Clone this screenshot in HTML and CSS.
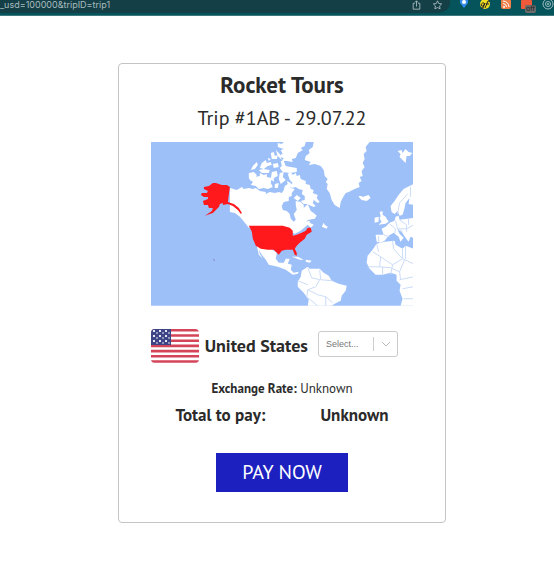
FILE: index.html
```
<!DOCTYPE html>
<html lang="en">
<head>
    <meta charset="UTF-8">
    <meta name="viewport" content="width=device-width, initial-scale=1.0">
    <title>Rocket Tours</title>
    <link rel="stylesheet" href="styles.css">
</head>
<body>
    <header class="toolbar">
        <div class="address">
            <span class="url">_usd=100000&amp;tripID=trip1</span>
            <svg class="icon" viewBox="0 0 12 12"><path d="M4 4H2v7h8V4H8M6 8V1M4 3l2-2 2 2"/></svg>
            <svg class="icon" viewBox="0 0 12 12"><path d="M6 1l1.500 3.200 3.500.5-2.500 2.400.6 3.500L6 9l-3.100 1.600.6-3.500L1 4.700l3.500-.5z"/></svg>
        </div>
        <div class="extensions">
            <svg viewBox="0 0 12 14"><path fill="#2f8bea" d="M2 0h8v3L6 8 2 3z"/><circle cx="6" cy="2" r="2" fill="#fff"/></svg>
            <svg viewBox="0 0 12 14"><circle cx="6" cy="4" r="5" fill="#f0dc20"/><path d="M5 3c-3-1-4 4-1 3l2-3-2 5H2M6 8l3-7h2M7 4h3" fill="none" stroke="#222"/></svg>
            <svg viewBox="0 0 12 14"><rect x="1" y="-1" width="10" height="10" rx="2" fill="#f08048"/><circle cx="4" cy="7" r="1" fill="#fff"/><path d="M3 3.500a3.500 3.500 0 0 1 3.500 3.500M3 1a6 6 0 0 1 6 6" fill="none" stroke="#fff"/></svg>
            <span class="blocker">
                <svg viewBox="0 0 12 14"><rect width="11" height="9" rx="1" fill="#f0593a"/></svg>
                <span class="badge">off</span>
            </span>
            <svg viewBox="0 0 12 14"><g fill="none" stroke="#9dbcc2"><circle cx="6" cy="4" r="5"/><circle cx="6" cy="4" r="2.500"/></g><circle cx="6" cy="4" r="1" fill="#9dbcc2"/></svg>
        </div>
    </header>

    <main>
        <div class="card">
            <h1>Rocket Tours</h1>
            <h2>Trip #1AB - 29.07.22</h2>

            <svg class="map" viewBox="0 0 263 164" role="img" aria-label="Map with the United States highlighted">
                <rect width="263" height="164" fill="#9dc0f9"/>
                <g class="land">
                    <!-- Greenland, Iceland, Svalbard -->
                    <path d="M163 0H219L215 5l1 4-3 3 1 5-2 4 2 4-3 4 1 5-3 1 2 4-3 2 1 4-5 2-6 3-3 1-3 5-2 4-1 6-5-3-3-5-2-7-3-4 1-5-2-2 2-3-3-3-1-6-3-4-6-2-6 1 2-3-6-2 1-4 4-3-1-3 4-3z"/>
                    <path d="M209 56l-1-2 3 0 1 1 6-2 2 3-4 3-5-1z"/>
                    <path d="M247 9l4-1 1 3 3-4 3 3 4 1-3 3-3 0-1 7-4-4-2-2 1-3z"/>
                    <!-- Ellesmere and the northern islands -->
                    <path d="M127 1l4 1 2-2h22l-1 4-4 2 2 2-5 3-2 5-4 1 1 3-6-1-5 0 2-3-5-2 4-2-2-4 3-1-6-2z"/>
                    <path d="M120 11l3-1 1 4 3-1-1 4-5 0zM125 8l4 4 2 6-4-4zM111 21l4-3 1 3 4-1 1 3-4 1-4 3-4-1zM102 24l4-4 1 3-3 4-4 1zM117 16l3 1-2 2zM130 12l4 2-3 2zM122 22l5-1 1 4-5 1z"/>
                    <path d="M130 19l3 0 2 5 5 1 6 1 0 4-7 1-7-1-3-4 2-2z"/>
                    <path d="M98 31l5-1 3 3-2 4-4 2-2-3zM104 35l5-1 0-3 4 2 3-1 0 3 5 1-1 5 2 4-5 2-4-1-5 1-3-3-5-1 2-3-2-3zM108 28l5-1 6 1-1 3-7 0zM121 30l5-1 1 5-4 2 0 4-3-3zM129 31l4-1-1 5 3 3-5 4-2-5zM124 42l4-1-1 5-3 0z"/>
                    <!-- Baffin -->
                    <path d="M137 32l3-2 2 3 3-2 1 3 3-1 1 4 5 2 0 3 4 1 1 4 3 1-1 3 5 2-1 3 3 4-2 1-4-3-1 3 3 3-2 1-7-3-3 0-3-3 4-1 0-4-3-2 1-4-4-1-3-2-4 1-2-3 3-2-3-3zM143 56l3-3 4 3-3 3z"/>
                    <!-- Canada -->
                    <path d="M79 46l7 2 5-3 2 2 5-1 4 1 3-1 4 3 6 1 0 2 4-2 5 1 4-1 3 1 2-3 1-4 3-2-1-3 4 2 0 5 4 1-3 4 0 3-3 1 0 4-5 1-2 4 1 4 4 1 3 3 1 5 3 3 2-2-2-6 3-4-1-5 0-4 5 1 3 3 0 3 4-4 3 7 3 2 3 3-2 3-6 1-3 2 4-1 0 2 4 2-3 3-3-3-7 6-6 3-7-3-8-3H98l-4-5-5-6-5-4-5-1z"/>
                    <path d="M171 85l2-4 1 2 3 2-1 2z"/>
                    <!-- Mexico and Central America -->
                    <path d="M106 104l4 1 6 2h4l6 4-1 6 3 4 5 0 2-4 4 0-2 5 4 1-1 5 3 3 5-1-1 2-5 1-7-5-8-3-9-2-3-5-4-5-3-5 1 4 3 5-4-4z"/>
                    <path d="M141 115l6 0 6 3-4 0zM155 118l6 1-2 2-4-1z"/>
                    <!-- South America -->
                    <path d="M151 129l6-4 2 2 10 0 4 4 5 3 3 5 7 3 8 2-1 5-4 5-1 5-6 3-3 2H157l1-6-5-7-6-6 0-5 3-5z"/>
                    <!-- Africa -->
                    <path d="M226 102l8-2 10-1 1 4 7 4 3-3 8 3V164H250l2-7-3-8 1-6-4-4 0-6-6-2-8 2-7 0-6-6-3-6 1-7 5-6z"/>
                    <!-- Europe -->
                    <path d="M225 93h8l-2-6 4-2 4-4 5-2 1-4 3-1 1 4 14-2V96l-3-1-2 5-3-4-4-6-4-2 2 4 4 4-3 4-2-5-5-4-5 3-4 5-4 2-4-1z"/>
                    <path d="M241 70l-1-6 4-5 4-6 5-6 10-5V63l-5-1 1-6-4 5-1 5-2 7-3 1-2-5-3 3z"/>
                    <path d="M229 70l3-1 0 4 3 2 3 5-3 2-7 1 3-3-2-3 1-3zM224 76l4-1v5l-4 1z"/>
                </g>
                <g class="borders">
                    <path d="M157 126l4 10 8 2-4 7-8 3-1 8M157 148l10 5 8 2 0 9M169 128l1 10 12 1M147 139l10 4M175 155l7 6M157 156l10 8"/>
                    <path d="M222 110l8 5 12 8 10-6 0-11M230 115l-1 10-12 0M242 123l-2 10M252 117l11 5M226 102l2 8M242 99l1 8 9 10M229 125l11 1 9 4 1 8M249 138l14-3M252 147l11-2M253 157l10 0M255 104v13M232 125v8M249 130l5-12"/>
                    <path d="M233 93l6 2M239 82l6 5-1 5M245 79l2 8 9 0 7-4M249 78l7 5v7M258 77v6M228 94v6M247 72l2-11 8-9M260 45v10M247 87l5 3"/>
                </g>
                <g class="selected">
                    <path d="M79 45l-3-2-5 0-6-2-3 0-4 3-5 1 0 2 4 2-1 2-5 0-1 2 3 2 4 0 0 2-5 2 1 4 4 0 1 3 4 0-1 3-7 5 8-3 6-6 1-3 3-1 0 2 5-1 5 2 5 4 3 4 1-1-3-5-5-4-6-2z"/>
                    <path d="M98 84h34l7 2 3 3 0 5 4-1 5-2 4-2 2-3 3 0 1 4-5 3-2 4-5 4-3 3-2 3 2 4 0 3-2-1-2-5-7 0-4 1-3 4-5-5-6 0-7-1-5-3-3-7-1-7z"/>
                    <path class="hawaii" d="M62 117h1v1h1v1h-1z"/>
                </g>
            </svg>

            <div class="country">
                <svg class="flag" viewBox="0 0 48 34" role="img" aria-label="Flag of the United States">
                    <defs>
                        <clipPath id="flag-shape"><rect width="48" height="34" rx="4"/></clipPath>
                        <pattern id="stars" width="6" height="5" patternUnits="userSpaceOnUse">
                            <path d="M2 1h2v2H2zM5 3.500h1v1H5zM0 3.500h1v1H0z" fill="#e4e6f2"/>
                        </pattern>
                    </defs>
                    <g clip-path="url(#flag-shape)">
                        <rect width="48" height="34" fill="#fff"/>
                        <path d="M0 1.300h48M0 6.500h48M0 11.700h48M0 16.900h48M0 22.100h48M0 27.300h48M0 32.500h48" stroke="#d5455a" stroke-width="2.600"/>
                        <rect width="20" height="16" fill="#3d4587"/>
                        <rect x="1" y="1" width="18" height="14" fill="url(#stars)"/>
                    </g>
                </svg>
                <span class="country-name">United States</span>
                <div class="currency">
                    <select aria-label="Currency">
                        <option>Select...</option>
                    </select>
                    <svg class="chevron" viewBox="0 0 10 10"><path d="M1 3l4 4 4-4"/></svg>
                </div>
            </div>

            <p class="rate"><b>Exchange Rate:</b> Unknown</p>
            <div class="total">
                <span>Total to pay:</span>
                <span>Unknown</span>
            </div>

            <button class="pay">PAY NOW</button>
        </div>
    </main>
</body>
</html>
```
FILE: styles.css
```
* {
    box-sizing: border-box;
}

body {
    margin: 0;
    background: #fff;
    color: #2b2b2b;
    font-family: "PT Sans", "Noto Sans", sans-serif;
}

.toolbar {
    display: flex;
    height: 16px;
    background: #05535b;
    border-bottom: 1px solid #3f7980;
}

.address {
    display: flex;
    flex: 1;
    gap: 10px;
    padding-right: 7px;
    background: #143f46;
    border-bottom: 2px solid #05535b;
    border-radius: 0 0 12px 0;
}

.url {
    flex: 1;
    color: #a9bcbf;
    font: 9px/10px Inter, sans-serif;
}

.icon {
    width: 11px;
    height: 10px;
    fill: none;
    stroke: #b4c5c8;
}

.extensions {
    display: flex;
    gap: 9px;
    padding-left: 8px;
}

.extensions svg {
    display: block;
    width: 12px;
    height: 14px;
}

.blocker {
    position: relative;
}

.badge {
    position: absolute;
    top: 5px;
    left: 4px;
    padding: 0 1px;
    border-radius: 2px;
    background: #6b6b6b;
    color: #222;
    font: 7px/8px Inter, sans-serif;
}

main {
    padding: 47px 0 47px 10px;
}

.card {
    display: flex;
    flex-direction: column;
    align-items: center;
    width: 60.4%;
    margin: 0 auto;
    padding: 6px 32px 30px;
    border: 1px solid #c4c4c4;
    border-radius: 4px;
}

h1 {
    margin: 0;
    font-size: 23px;
    line-height: 30px;
}

h2 {
    margin: 0;
    font-size: 20px;
    font-weight: normal;
    line-height: 36px;
}

.map {
    display: block;
    width: 100%;
    margin: 6px 0 23px;
}

.land {
    fill: #fff;
}

.borders {
    fill: none;
    stroke: #cbdcf8;
    stroke-width: 1;
}

.selected {
    fill: #ff191c;
}

.hawaii {
    fill: #8087b8;
}

.country {
    display: flex;
    align-items: center;
    width: 100%;
    gap: 6px;
}

.flag {
    width: 48px;
    height: 34px;
}

.country-name {
    font-size: 18px;
    font-weight: bold;
    white-space: nowrap;
}

.currency {
    position: relative;
    width: 80px;
    margin: 0 0 4px 4px;
}

.currency select {
    appearance: none;
    display: block;
    width: 100%;
    height: 26px;
    padding: 0 7px;
    border: 1px solid #ccc;
    border-radius: 3px;
    background: #fff;
    color: #777;
    font: 9px "Liberation Sans", sans-serif;
}

.chevron {
    position: absolute;
    top: 6px;
    right: 0;
    width: 25px;
    height: 14px;
    padding: 2px 7px;
    border-left: 1px solid #ccc;
    fill: none;
    stroke: #bbb;
    pointer-events: none;
}

.rate {
    margin: 16px 0 4px;
    font-size: 13px;
    line-height: 20px;
}

.total {
    display: flex;
    justify-content: space-between;
    width: 213px;
    font-size: 17px;
    font-weight: bold;
    line-height: 24px;
}

.pay {
    width: 50%;
    height: 39px;
    margin-top: 26px;
    padding: 0;
    border: 0;
    background: #1c20bf;
    color: #fff;
    font-family: inherit;
    font-size: 20px;
}
```
